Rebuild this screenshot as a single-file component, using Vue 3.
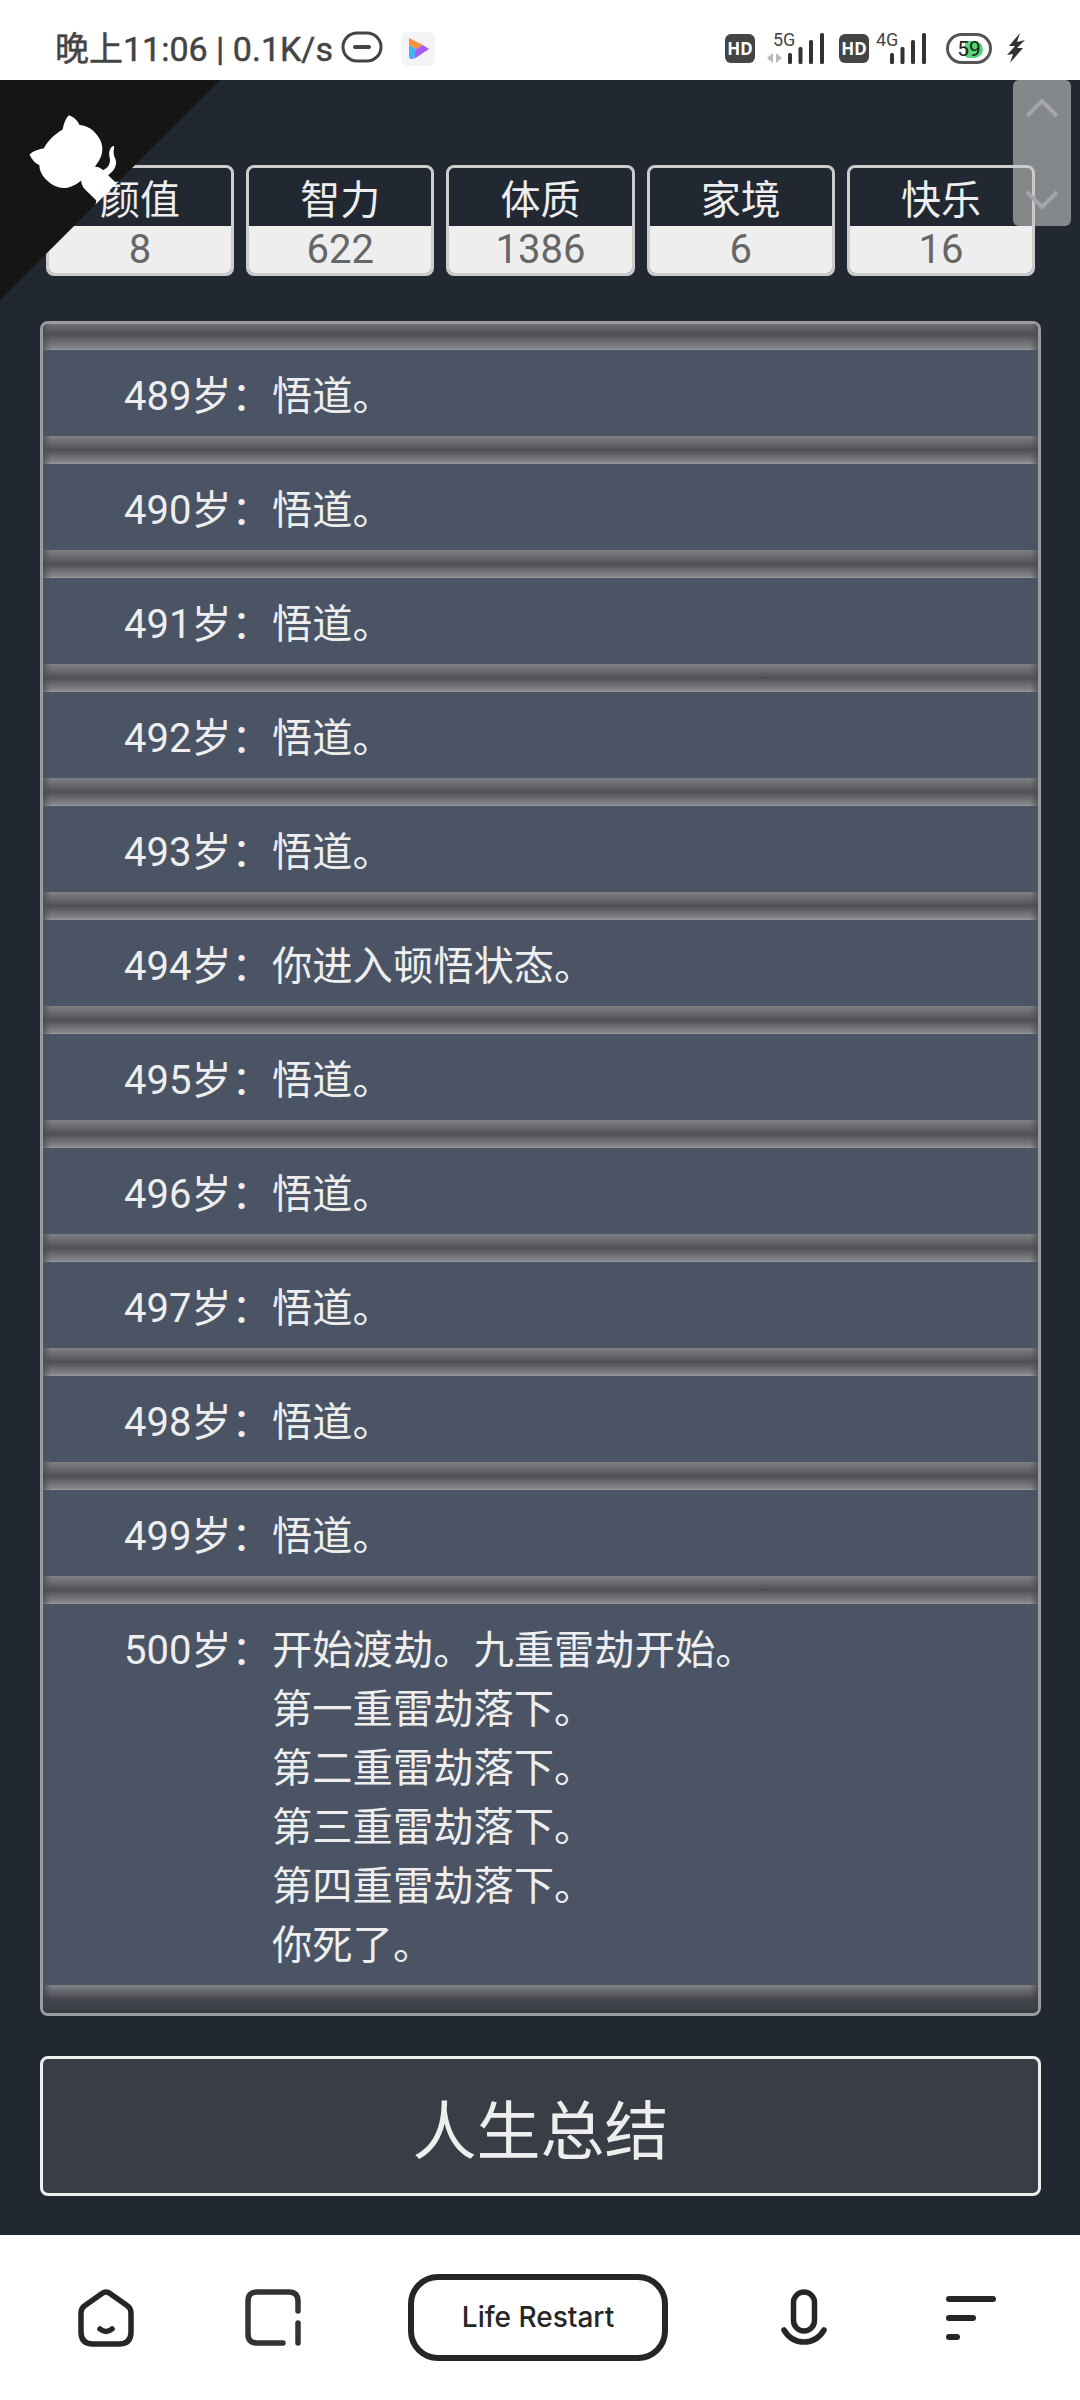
<template>
  <div class="phone">
    <header class="status">
      <div class="status-left">
        <span class="clock">晚上11:06 | 0.1K/s</span>
        <svg class="dnd" width="42" height="32" viewBox="0 0 42 32">
          <rect x="2" y="2" width="38" height="28" rx="14" fill="none" stroke="#444" stroke-width="3" />
          <rect x="12" y="14" width="18" height="4" rx="2" fill="#444" />
        </svg>
        <svg class="app-badge" width="34" height="34" viewBox="0 0 34 34">
          <rect width="34" height="34" rx="7" fill="#f4f4f6" />
          <path d="M8 6 L22 13 L15 17 L8 13 Z" fill="#f5923e" />
          <path d="M8 13 L15 17 L15 22 L12 27 Q8 28 8 24 Z" fill="#3cb6f2" />
          <path d="M15 17 L22 13 L28 17 L13 27 Z" fill="#a65cf0" />
        </svg>
      </div>
      <div class="status-right">
        <span class="hd">HD</span>
        <div class="net">
          <span class="net-label">5G</span>
          <svg class="arrows" width="16" height="12" viewBox="0 0 16 12">
            <path d="M0 6 L6 1 V11 Z M9 1 L15 6 L9 11 Z" fill="#bbb" />
          </svg>
          <svg width="36" height="31" viewBox="0 0 36 31">
            <rect x="0" y="20" width="4" height="11" rx="1.500" fill="#333" />
            <rect x="10.500" y="14" width="4" height="17" rx="1.500" fill="#333" />
            <rect x="21" y="7" width="4" height="24" rx="1.500" fill="#333" />
            <rect x="32" y="0" width="4" height="31" rx="1.500" fill="#333" />
          </svg>
        </div>
        <span class="hd">HD</span>
        <div class="net net-4g">
          <span class="net-label">4G</span>
          <svg width="36" height="31" viewBox="0 0 36 31">
            <rect x="0" y="20" width="4" height="11" rx="1.500" fill="#333" />
            <rect x="10.500" y="14" width="4" height="17" rx="1.500" fill="#333" />
            <rect x="21" y="7" width="4" height="24" rx="1.500" fill="#333" />
            <rect x="32" y="0" width="4" height="31" rx="1.500" fill="#333" />
          </svg>
        </div>
        <div class="battery"><i class="battery-fill"></i><span>59</span></div>
        <svg class="bolt" width="18" height="30" viewBox="0 0 18 30">
          <path d="M13 0 L2 13 L8 13 L0 22 L6 21 L3 30 L16 15 L10 15 L18 7 L10 9 Z" fill="#333" />
        </svg>
      </div>
    </header>

    <main class="page">
      <a class="corner">
        <svg width="220" height="220" viewBox="0 0 250 250">
          <path d="M0,0 L115,115 L130,115 L142,142 L250,250 L250,0 Z" fill="#151513" />
          <path d="M128.3,109.0 C113.8,99.7 119.0,89.6 119.0,89.6 C122.0,82.7 120.5,78.6 120.5,78.6 C119.2,72.0 123.4,76.3 123.4,76.3 C127.3,80.9 125.5,87.3 125.5,87.3 C122.9,97.6 130.6,101.9 134.4,103.2" fill="#fff" />
          <path d="M115.0,115.0 C114.9,115.1 118.7,116.5 119.8,115.4 L133.7,101.6 C136.9,99.2 139.9,98.4 142.2,98.6 C133.8,88.0 127.5,74.4 143.8,58.0 C148.5,53.4 154.0,51.2 159.7,51.0 C160.3,49.4 163.2,43.6 171.4,40.1 C171.4,40.1 176.1,42.5 178.8,56.2 C183.1,58.6 187.2,61.8 190.9,65.4 C194.5,69.0 197.7,73.2 200.1,77.6 C213.8,80.2 216.3,84.9 216.3,84.9 C212.7,93.1 206.9,96.0 205.4,96.6 C205.1,102.4 203.0,107.8 198.3,112.5 C181.9,128.9 168.3,122.5 157.7,114.1 C157.9,116.9 156.7,120.9 152.7,124.9 L141.0,136.5 C139.8,137.7 141.6,141.9 141.8,141.8 Z" fill="#fff" />
        </svg>
      </a>

      <div class="scroller">
        <svg width="34" height="20" viewBox="0 0 34 20"><path d="M2 18 L17 3 L32 18" fill="none" stroke="#a5a6a9" stroke-width="4" /></svg>
        <svg width="34" height="20" viewBox="0 0 34 20"><path d="M2 2 L17 17 L32 2" fill="none" stroke="#a5a6a9" stroke-width="4" /></svg>
      </div>

      <ul class="stats">
        <li v-for="s in stats" :key="s.label" class="stat">
          <span class="stat-label">{{ s.label }}</span>
          <span class="stat-value">{{ s.value }}</span>
        </li>
      </ul>

      <div class="log">
        <div class="gap gap-top"></div>
        <template v-for="(row, i) in log" :key="row.age">
          <div v-if="i > 0" class="gap"></div>
          <div class="log-row">
            <span class="age">{{ row.age }}岁：</span>
            <div class="events">
              <p v-for="line in row.lines" :key="line">{{ line }}</p>
            </div>
          </div>
        </template>
        <div class="gap gap-end"></div>
      </div>

      <button class="summary">人生总结</button>
    </main>

    <nav class="nav">
      <svg width="56" height="58" viewBox="0 0 56 58">
        <path d="M28 3 Q30 3 32 4.500 L49 16.500 Q53 19 53 24 V43 Q53 55 41 55 H15 Q3 55 3 43 V24 Q3 19 7 16.500 L24 4.500 Q26 3 28 3 Z" fill="none" stroke="#262626" stroke-width="5.500" stroke-linejoin="round" />
        <path d="M22 40 Q28 45 34 40" fill="none" stroke="#262626" stroke-width="5.500" stroke-linecap="round" />
      </svg>
      <svg class="nav-square" width="56" height="58" viewBox="0 0 56 58">
        <path d="M53 22 V12 Q53 3 44 3 H12 Q3 3 3 12 V45 Q3 54 12 54 H38" fill="none" stroke="#333" stroke-width="5.500" stroke-linecap="round" />
        <path d="M53 34 V54" fill="none" stroke="#333" stroke-width="5.500" stroke-linecap="round" />
      </svg>
      <div class="title-pill">Life Restart</div>
      <svg class="nav-mic" width="46" height="58" viewBox="0 0 46 58">
        <rect x="12.500" y="3" width="21" height="39" rx="10.500" fill="none" stroke="#262626" stroke-width="5.500" />
        <path d="M3 41 Q10 53 23 53 Q36 53 43 41" fill="none" stroke="#262626" stroke-width="5.500" stroke-linecap="round" />
      </svg>
      <div class="menu">
        <i class="menu-long"></i>
        <i class="menu-mid"></i>
        <i class="menu-short"></i>
      </div>
    </nav>
  </div>
</template>

<script setup>
const stats = [
  { label: '颜值', value: 8 },
  { label: '智力', value: 622 },
  { label: '体质', value: 1386 },
  { label: '家境', value: 6 },
  { label: '快乐', value: 16 },
]

const wu = ['悟道。']
const log = [
  { age: 489, lines: wu },
  { age: 490, lines: wu },
  { age: 491, lines: wu },
  { age: 492, lines: wu },
  { age: 493, lines: wu },
  { age: 494, lines: ['你进入顿悟状态。'] },
  { age: 495, lines: wu },
  { age: 496, lines: wu },
  { age: 497, lines: wu },
  { age: 498, lines: wu },
  { age: 499, lines: wu },
  {
    age: 500,
    lines: [
      '开始渡劫。九重雷劫开始。',
      '第一重雷劫落下。',
      '第二重雷劫落下。',
      '第三重雷劫落下。',
      '第四重雷劫落下。',
      '你死了。',
    ],
  },
]
</script>

<style>
html,
body {
  margin: 0;
  background: #fff;
}
</style>

<style scoped>
.phone {
  width: 1080px;
  height: 2400px;
  display: flex;
  flex-direction: column;
  overflow: hidden;
  font-family: Roboto, "Noto Sans CJK SC", sans-serif;
}

.status {
  height: 80px;
  flex: none;
  background: #fff;
  display: flex;
  justify-content: space-between;
  padding: 29px 55px 0 55px;
  box-sizing: border-box;
}

.status-left {
  display: flex;
  align-items: flex-start;
}

.clock {
  font-size: 34px;
  line-height: 40px;
  color: #444;
  -webkit-text-stroke: 0.5px #444;
}

.dnd {
  margin: 2px 0 0 8px;
}

.app-badge {
  margin: 3px 0 0 18px;
}

.status-right {
  display: flex;
  align-items: flex-start;
}

.hd {
  width: 30px;
  height: 29px;
  margin-top: 5px;
  border-radius: 6px;
  background: #444;
  color: #fff;
  font-family: "Noto Sans", sans-serif;
  font-size: 17px;
  font-weight: 700;
  line-height: 29px;
  text-align: center;
}

.net {
  position: relative;
  width: 57px;
  height: 31px;
  margin: 4px 15px 0 12px;
  display: flex;
  justify-content: flex-end;
  align-items: flex-end;
}

.net-4g {
  width: 50px;
  margin: 4px 20px 0 7px;
}

.net-label {
  position: absolute;
  left: 6px;
  top: -3px;
  font-size: 18px;
  line-height: 20px;
  color: #444;
}

.net-4g .net-label {
  left: 0;
}

.arrows {
  position: absolute;
  left: 0;
  bottom: 0;
}

.battery {
  position: relative;
  width: 46px;
  height: 31px;
  margin-top: 4px;
  box-sizing: border-box;
  border: 3px solid #555;
  border-radius: 16px;
  display: flex;
  align-items: center;
  justify-content: center;
}

.battery-fill {
  position: absolute;
  left: 16px;
  top: 5px;
  width: 18px;
  height: 17px;
  border-radius: 4px 9px 9px 4px;
  background: #52d678;
}

.battery span {
  position: relative;
  font-size: 21px;
  line-height: 24px;
  color: #222;
}

.bolt {
  margin: 4px 0 0 15px;
}

.page {
  position: relative;
  flex: 1;
  background: #222831;
  padding: 85px 39px 0 40px;
}

.corner {
  position: absolute;
  left: 0;
  top: 0;
  z-index: 3;
  transform: scaleX(-1);
  line-height: 0;
}

.scroller {
  position: absolute;
  top: 0;
  left: 1013px;
  z-index: 2;
  width: 58px;
  height: 146px;
  box-sizing: border-box;
  padding: 18px 0 16px;
  border-radius: 6px;
  background: rgba(200, 200, 200, 0.6);
  display: flex;
  flex-direction: column;
  justify-content: space-between;
  align-items: center;
}

.stats {
  list-style: none;
  margin: 0 6px 45px;
  padding: 0;
  display: grid;
  grid-template-columns: repeat(5, 1fr);
  gap: 12px;
}

.stat {
  height: 111px;
  box-sizing: border-box;
  border: 3px solid #ccc;
  border-radius: 8px;
  overflow: hidden;
  display: flex;
  flex-direction: column;
  text-align: center;
}

.stat-label {
  height: 58px;
  box-sizing: border-box;
  padding-top: 8px;
  font-size: 40px;
  line-height: 50px;
  color: #eee;
}

.stat-value {
  flex: 1;
  background: #eee;
  color: #666;
  font-size: 40px;
  line-height: 47px;
}

.log {
  height: 1695px;
  box-sizing: border-box;
  border: 3px solid #9a9b9d;
  border-radius: 8px;
  overflow: hidden;
  display: flex;
  flex-direction: column;
}

.gap {
  height: 28px;
  flex: none;
  background:
    linear-gradient(to right, rgba(74, 76, 82, 0.7) 0, rgba(74, 76, 82, 0) 8px, rgba(74, 76, 82, 0) calc(100% - 8px), rgba(74, 76, 82, 0.7) 100%),
    linear-gradient(to bottom, #808185 0, #4e5056 50%, #85868a 94%, #9fa0a2 100%);
}

.gap-top {
  height: 26px;
  background:
    linear-gradient(to right, rgba(74, 76, 82, 0.7) 0, rgba(74, 76, 82, 0) 8px, rgba(74, 76, 82, 0) calc(100% - 8px), rgba(74, 76, 82, 0.7) 100%),
    linear-gradient(to bottom, #6e7075 0, #4e5056 40%, #85868a 94%, #9a9b9d 100%);
}

.gap-end {
  flex: 1;
  background:
    linear-gradient(to right, rgba(60, 62, 69, 0.7) 0, rgba(60, 62, 69, 0) 8px, rgba(60, 62, 69, 0) calc(100% - 8px), rgba(60, 62, 69, 0.7) 100%),
    linear-gradient(to bottom, #808185 0, #46484f 50%, #3a3c43 100%);
}

.log-row {
  display: flex;
  flex: none;
  padding: 17px 0 10px 81px;
  background: #4a5465;
  color: #eee;
  font-size: 40px;
  line-height: 59px;
}

.age {
  width: 148px;
  flex: none;
  white-space: nowrap;
}

.events p {
  margin: 0;
  font-size: 40.3px;
}

.summary {
  display: block;
  width: 1001px;
  height: 140px;
  margin-top: 40px;
  border: 3px solid #eee;
  border-radius: 8px;
  background: #393e46;
  color: #eee;
  font-family: inherit;
  font-size: 64px;
  padding: 0;
}

.nav {
  height: 165px;
  flex: none;
  background: #fff;
  box-sizing: border-box;
  padding-left: 78px;
  display: flex;
  align-items: center;
}

.nav-square {
  margin-left: 111px;
}

.title-pill {
  width: 260px;
  height: 87px;
  margin-left: 107px;
  box-sizing: border-box;
  border: 6px solid #262626;
  border-radius: 30px;
  color: #262626;
  font-family: Inter, sans-serif;
  font-size: 28px;
  font-weight: 500;
  line-height: 75px;
  text-align: center;
}

.nav-mic {
  margin-left: 113px;
}

.menu {
  width: 50px;
  margin-left: 119px;
  display: flex;
  flex-direction: column;
  gap: 13px;
}

.menu i {
  display: block;
  height: 6px;
  border-radius: 3px;
  background: #262626;
}

.menu-mid {
  width: 30px;
}

.menu-short {
  width: 14px;
}
</style>
